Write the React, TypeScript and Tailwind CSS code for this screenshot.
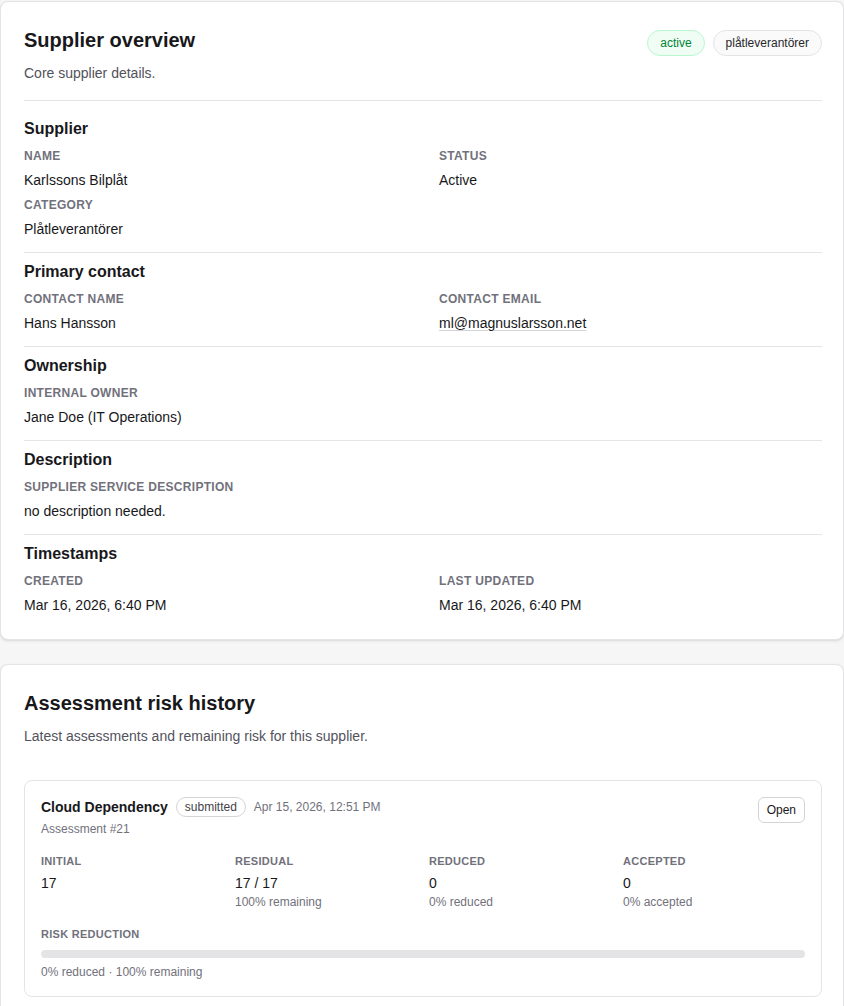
import React from 'react';

type Field = { label: string; value: string; link?: boolean };

type Section = { title: string; fields: Field[] };

const sections: Section[] = [
  {
    title: 'Supplier',
    fields: [
      { label: 'Name', value: 'Karlssons Bilplåt' },
      { label: 'Status', value: 'Active' },
      { label: 'Category', value: 'Plåtleverantörer' },
    ],
  },
  {
    title: 'Primary contact',
    fields: [
      { label: 'Contact name', value: 'Hans Hansson' },
      { label: 'Contact email', value: 'ml@magnuslarsson.net', link: true },
    ],
  },
  {
    title: 'Ownership',
    fields: [{ label: 'Internal owner', value: 'Jane Doe (IT Operations)' }],
  },
  {
    title: 'Description',
    fields: [{ label: 'Supplier service description', value: 'no description needed.' }],
  },
  {
    title: 'Timestamps',
    fields: [
      { label: 'Created', value: 'Mar 16, 2026, 6:40 PM' },
      { label: 'Last updated', value: 'Mar 16, 2026, 6:40 PM' },
    ],
  },
];

const metrics = [
  { label: 'Initial', value: '17', note: '' },
  { label: 'Residual', value: '17 / 17', note: '100% remaining' },
  { label: 'Reduced', value: '0', note: '0% reduced' },
  { label: 'Accepted', value: '0', note: '0% accepted' },
];

const FieldItem = ({ field }: { field: Field }) => (
  <div>
    <div className="text-xs leading-4 font-semibold uppercase tracking-wide text-zinc-500">
      {field.label}
    </div>
    <div className="mt-1.5 text-sm leading-5 text-zinc-900">
      {field.link ? (
        <a href="#" className="underline decoration-zinc-300 underline-offset-2">
          {field.value}
        </a>
      ) : (
        field.value
      )}
    </div>
  </div>
);

const SupplierOverview = () => (
  <section className="rounded-lg border border-zinc-200 bg-white pl-[23px] pr-[21px] py-6 shadow-sm">
    <div className="flex items-start justify-between border-b border-zinc-200 pb-[17px]">
      <div>
        <h2 className="text-xl leading-7 font-bold text-zinc-900">Supplier overview</h2>
        <p className="mt-[9px] text-sm leading-5 text-zinc-600">Core supplier details.</p>
      </div>
      <div className="mt-[4px] flex items-center gap-2">
        <span className="rounded-full border border-green-200 bg-green-50 px-3 py-1 text-xs leading-4 text-green-700">
          active
        </span>
        <span className="rounded-full border border-zinc-200 bg-zinc-50 px-3 py-1 text-xs leading-4 text-zinc-800">
          plåtleverantörer
        </span>
      </div>
    </div>

    {sections.map((s, i) => (
      <div
        key={s.title}
        className={
          i === 0
            ? 'pt-4 pb-[13px]'
            : i === sections.length - 1
              ? 'border-t border-zinc-200 pt-[7px]'
              : 'border-t border-zinc-200 pt-[7px] pb-[13px]'
        }
      >
        <h3 className="text-base leading-6 font-bold text-zinc-900">{s.title}</h3>
        <div className="mt-[7px] grid grid-cols-2 gap-x-8 gap-y-[7px]">
          {s.fields.map((f) => (
            <FieldItem key={f.label} field={f} />
          ))}
        </div>
      </div>
    ))}
  </section>
);

const AssessmentCard = () => (
  <div className="rounded-lg border border-zinc-200 bg-white p-4">
    <div className="flex items-start justify-between">
      <div>
        <div className="flex items-center gap-2">
          <span className="text-sm leading-5 font-bold text-zinc-900">Cloud Dependency</span>
          <span className="rounded-full border border-zinc-300 px-2 py-px text-xs leading-4 text-zinc-700">
            submitted
          </span>
          <span className="text-xs leading-4 text-zinc-500">Apr 15, 2026, 12:51 PM</span>
        </div>
        <div className="mt-1 text-xs leading-4 text-zinc-500">Assessment #21</div>
      </div>
      <button className="rounded-md border border-zinc-300 bg-white px-2 py-1 text-xs leading-4 text-zinc-900">
        Open
      </button>
    </div>

    <div className="mt-4 grid grid-cols-4 gap-3">
      {metrics.map((m) => (
        <div key={m.label}>
          <div className="text-[11px] leading-4 font-semibold uppercase tracking-wide text-zinc-500">
            {m.label}
          </div>
          <div className="mt-1 text-sm leading-5 text-zinc-900">{m.value}</div>
          {m.note && <div className="mt-px text-xs leading-4 text-zinc-500">{m.note}</div>}
        </div>
      ))}
    </div>

    <div className="mt-4 text-[11px] leading-4 font-semibold uppercase tracking-wide text-zinc-500">
      Risk reduction
    </div>
    <div className="mt-2 h-2 w-full rounded-full bg-zinc-200">
      <div className="h-2 rounded-full bg-emerald-500" style={{ width: '0%' }} />
    </div>
    <div className="mt-1.5 text-xs leading-4 text-zinc-500">0% reduced · 100% remaining</div>
  </div>
);

const RiskHistory = () => (
  <section className="rounded-lg border border-zinc-200 bg-white pl-[23px] pr-[21px] py-6 shadow-sm">
    <h2 className="text-xl leading-7 font-bold text-zinc-900">Assessment risk history</h2>
    <p className="mt-[9px] text-sm leading-5 text-zinc-600">
      Latest assessments and remaining risk for this supplier.
    </p>
    <div className="mt-[34px]">
      <AssessmentCard />
    </div>
  </section>
);

export default function App() {
  return (
    <div
      className="min-h-screen bg-[#f6f6f6] pt-px"
      style={{ fontFamily: '"Liberation Sans", Arial, sans-serif' }}
    >
      <div className="flex flex-col gap-6">
        <SupplierOverview />
        <RiskHistory />
      </div>
    </div>
  );
}
